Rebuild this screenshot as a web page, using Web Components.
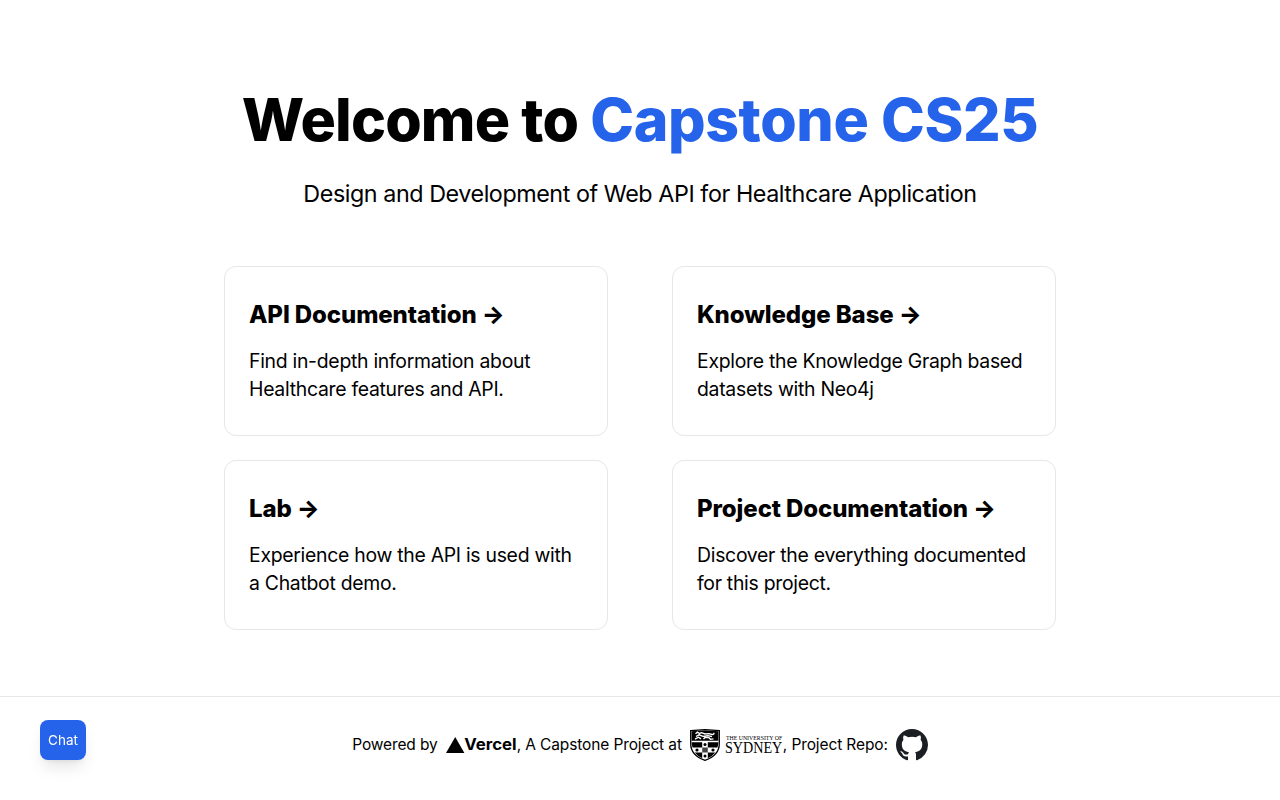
<!DOCTYPE html>
<html lang="en">
<head>
<meta charset="utf-8">
<title>Capstone CS25</title>
<style>
html,body{margin:0;background:#fff;color:#000;font-family:Inter,sans-serif}
</style>
</head>
<body>
<home-page></home-page>
<script>
const define = (name, html) => customElements.define(name, class extends HTMLElement {
  constructor() {
    super();
    this.attachShadow({ mode: 'open' }).innerHTML = html;
  }
});

define('info-card', `
<style>
:host{display:block;box-sizing:border-box;width:384px;height:170px;padding:32px 24px;border:1px solid #e5e7eb;border-radius:12px}
h3{margin:0;font-size:24px;line-height:32px;font-weight:800;letter-spacing:-.1px}
p{margin:16px 0 0;font-size:19.4px;line-height:28px;letter-spacing:-.28px}
</style>
<h3><slot name="title"></slot> →</h3><p><slot></slot></p>`);

define('page-hero', `
<style>
:host{display:block;text-align:center}
h1{margin:0;font-size:59px;line-height:60px;font-weight:800;letter-spacing:-.85px}
p{margin:28px 0 0;font-size:23.3px;line-height:32px;letter-spacing:-.43px}
.accent{color:#2563eb;letter-spacing:-.4px}
</style>
<h1>Welcome to <span class="accent"><slot></slot></span></h1><p><slot name="sub"></slot></p>`);

define('vercel-logo', `
<style>:host{display:block;width:71px;height:16px}svg{display:block;overflow:visible}</style>
<svg width="71" height="16"><path d="M9.2 0l9.2 16H0z"/>
<text x="18.2" y="12.8" font-family="Inter" font-weight="700" font-size="15.4" textLength="52.4" lengthAdjust="spacingAndGlyphs">Vercel</text></svg>`);

define('sydney-logo', `
<style>:host{display:block;width:93px;height:32px}svg{display:block;overflow:visible}</style>
<svg width="93" height="32">
<path d="M.7 1.6Q8 .9 15 .6q7 .3 14.3 1v13.2C29.3 24 23 28.6 15 31.4 7 28.6.7 24 .7 14.8z" fill="#fff" stroke="#000" stroke-width="1.3"/>
<path d="M1.6 2.3Q8 1.7 15 1.5q7 .2 13.4.8v9.5H1.6z"/>
<path d="M5.5 4.8l2-1.6 2 1.3 2-.8 3.5 1.3 4-.4 3 .9q2 .3 2-1.7M6 7.5l3-1.7 4 1.6 5-.8 4 1.1M5 10.2l3.5-2 2.5 1.7M13.5 10.2l1.5-1.9 4 .4 1.5 1.6 3-.4" fill="none" stroke="#fff" stroke-width="1.35"/>
<path d="M1.6 13.2h10.6v5.3H2.6Q1.7 16.3 1.6 13.2zM17.8 13.2h10.6q-.1 3.1-1 5.3h-9.6zM4.7 23.5h7.5v5.7Q7.5 27.2 4.7 23.5zM17.8 23.5h7.5q-2.8 3.7-7.5 5.7z"/>
<path d="M12.2 18.5h5.6v5h-5.6z" fill="#444"/>
<g><circle cx="15" cy="15.5" r="1.5"/><circle cx="7" cy="21" r="1.6"/><circle cx="23" cy="21" r="1.6"/><circle cx="15" cy="27" r="1.5"/></g>
<text x="36" y="11" font-family="Liberation Serif" font-size="6.3" textLength="56.2" lengthAdjust="spacingAndGlyphs">THE UNIVERSITY OF</text>
<text x="35" y="23.6" font-family="Liberation Serif" font-size="16.3" textLength="57.2" lengthAdjust="spacingAndGlyphs">SYDNEY</text>
</svg>`);

define('github-logo', `
<style>:host{display:block;width:32px;height:32px}svg{display:block}</style>
<svg width="32" height="32" viewBox="0 0 16 16" fill="#1b1f23"><path fill-rule="evenodd" d="M8 0C3.58 0 0 3.58 0 8c0 3.54 2.29 6.53 5.47 7.59.4.07.55-.17.55-.38 0-.19-.01-.82-.01-1.49-2.01.37-2.53-.49-2.69-.94-.09-.23-.48-.94-.82-1.13-.28-.15-.68-.52-.01-.53.63-.01 1.08.58 1.23.82.72 1.21 1.87.87 2.33.66.07-.52.28-.87.51-1.07-1.78-.2-3.64-.89-3.64-3.95 0-.87.31-1.59.82-2.15-.08-.2-.36-1.02.08-2.12 0 0 .67-.21 2.2.82.64-.18 1.32-.27 2-.27s1.36.09 2 .27c1.53-1.04 2.2-.82 2.2-.82.44 1.1.16 1.92.08 2.12.51.56.82 1.27.82 2.15 0 3.07-1.87 3.75-3.65 3.95.29.25.54.73.54 1.48 0 1.07-.01 1.93-.01 2.2 0 .21.15.46.55.38A8.01 8.01 0 0 0 16 8c0-4.42-3.58-8-8-8z"/></svg>`);

define('page-footer', `
<style>
:host{display:flex;box-sizing:border-box;height:97px;border-top:1px solid #e5e7eb;align-items:center;justify-content:center;font-size:15.5px;line-height:24px}
span{white-space:pre;letter-spacing:-.12px}
span:first-child{letter-spacing:-.2px}
vercel-logo,sydney-logo,github-logo{margin-left:8px}
</style>
<span>Powered by</span><vercel-logo></vercel-logo><span>, A Capstone Project at</span><sydney-logo></sydney-logo><span>, Project Repo:</span><github-logo></github-logo>`);

define('chat-button', `
<style>
:host{position:fixed;left:40px;bottom:40px}
button{display:block;box-sizing:border-box;width:46px;height:40px;padding:0;border:0;border-radius:8px;background:#2563eb;color:#fff;font:400 13.5px/20px Inter,sans-serif;box-shadow:0 10px 15px -3px rgba(0,0,0,.1),0 4px 6px -4px rgba(0,0,0,.1)}
</style>
<button><slot></slot></button>`);

define('home-page', `
<style>
:host{display:block;min-height:800px}
main{box-sizing:border-box;height:696px;padding-top:90px}
section{display:grid;grid-template-columns:384px 384px;gap:24px 64px;justify-content:center;margin-top:56px}
</style>
<main>
<page-hero>Capstone CS25<span slot="sub">Design and Development of Web API for Healthcare Application</span></page-hero>
<section>
<info-card><span slot="title">API Documentation</span>Find in-depth information about Healthcare features and API.</info-card>
<info-card><span slot="title">Knowledge Base</span>Explore the Knowledge Graph based datasets with Neo4j</info-card>
<info-card><span slot="title">Lab</span>Experience how the API is used with a Chatbot demo.</info-card>
<info-card><span slot="title">Project Documentation</span>Discover the everything documented for this project.</info-card>
</section>
</main>
<page-footer></page-footer>
<chat-button>Chat</chat-button>`);
</script>
</body>
</html>
